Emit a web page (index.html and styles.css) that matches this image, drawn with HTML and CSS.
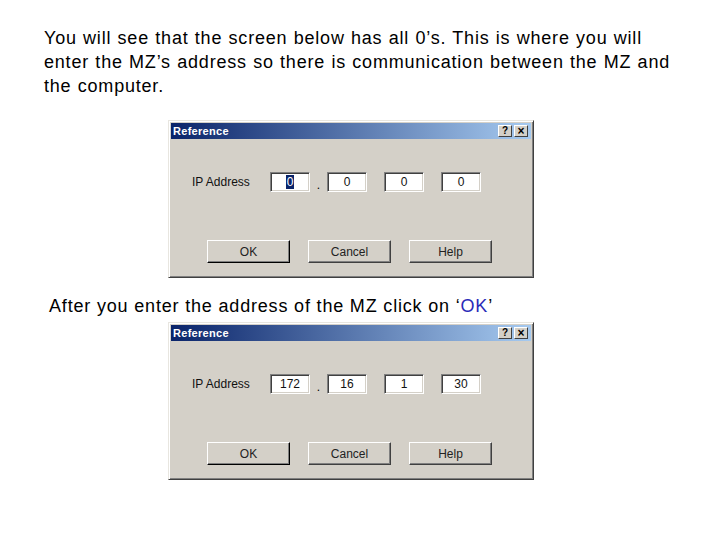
FILE: index.html
```html
<!DOCTYPE html>
<html>
<head>
<meta charset="utf-8">
<link rel="stylesheet" href="styles.css">
</head>
<body>
<p class="intro">You will see that the screen below has all 0’s. This is where you will<br>enter the MZ’s address so there is communication between the MZ and<br>the computer.</p>

<div class="dialog first">
  <div class="titlebar">
    <span class="title">Reference</span>
    <span class="tbtns"><span class="tbtn">?</span><span class="tbtn x">×</span></span>
  </div>
  <div class="ip-row">
    <span class="label">IP Address</span>
    <span class="field"><span class="sel">0</span></span>
    <span class="sep">.</span>
    <span class="field">0</span>
    <span class="sep"></span>
    <span class="field">0</span>
    <span class="sep"></span>
    <span class="field">0</span>
  </div>
  <div class="btn-row">
    <span class="btn default">OK</span>
    <span class="btn">Cancel</span>
    <span class="btn">Help</span>
  </div>
</div>

<p class="after">After you enter the address of the MZ click on ‘<span class="ok">OK</span>’</p>

<div class="dialog second">
  <div class="titlebar">
    <span class="title">Reference</span>
    <span class="tbtns"><span class="tbtn">?</span><span class="tbtn x">×</span></span>
  </div>
  <div class="ip-row">
    <span class="label">IP Address</span>
    <span class="field">172</span>
    <span class="sep">.</span>
    <span class="field">16</span>
    <span class="sep"></span>
    <span class="field">1</span>
    <span class="sep"></span>
    <span class="field">30</span>
  </div>
  <div class="btn-row">
    <span class="btn default">OK</span>
    <span class="btn">Cancel</span>
    <span class="btn">Help</span>
  </div>
</div>
</body>
</html>
```

FILE: styles.css
```css
html, body {
  margin: 0;
  padding: 0;
  background: #ffffff;
}
body {
  font-family: "Liberation Sans", Arial, sans-serif;
  color: #000;
  width: 720px;
  height: 540px;
  overflow: hidden;
}
.intro {
  margin: 0;
  padding: 26px 0 0 44px;
  font-size: 18px;
  line-height: 24px;
  letter-spacing: 0.8px;
  word-spacing: 0.5px;
  white-space: nowrap;
}
.after {
  margin: 16px 0 0 49px;
  font-size: 18px;
  line-height: 24px;
  letter-spacing: 0.82px;
  white-space: nowrap;
}
.ok { color: #2a2ab8; }

.dialog {
  box-sizing: border-box;
  width: 366px;
  height: 158px;
  margin-left: 168px;
  background: #d4d0c8;
  border: 1px solid;
  border-color: #e8e6e0 #404040 #404040 #e8e6e0;
  box-shadow: inset 1px 1px 0 #ffffff, inset -1px -1px 0 #808080;
  padding: 2px;
  font-family: "Liberation Sans", Arial, sans-serif;
  font-size: 12px;
}
.dialog.first { margin-top: 22px; }
.dialog.second { margin-top: 4px; }

.titlebar {
  height: 16px;
  display: flex;
  align-items: center;
  justify-content: space-between;
  background: linear-gradient(to right, #0a246a, #a6caf0);
  padding: 0 3px 0 2px;
}
.title {
  color: #fff;
  font-weight: bold;
  font-size: 11px;
  letter-spacing: 0.3px;
}
.tbtns { display: flex; gap: 2px; }
.tbtn {
  box-sizing: border-box;
  width: 14px;
  height: 12px;
  background: #d4d0c8;
  border: 1px solid;
  border-color: #fff #404040 #404040 #fff;
  font-size: 10px;
  font-weight: bold;
  line-height: 10px;
  text-align: center;
  color: #000;
}
.tbtn.x { font-size: 12px; }

.ip-row {
  display: flex;
  align-items: center;
  margin-top: 33px;
  padding-left: 21px;
}
.label {
  width: 78px;
  font-size: 12px;
  color: #111;
}
.field {
  box-sizing: border-box;
  width: 40px;
  height: 20px;
  background: #fff;
  border: 1px solid;
  border-color: #808080 #fff #fff #808080;
  box-shadow: inset 1px 1px 0 #404040, inset -1px -1px 0 #d4d0c8;
  text-align: center;
  line-height: 18px;
  font-size: 12px;
  color: #111;
}
.sel {
  background: #0a246a;
  color: #fff;
  padding: 0 1px;
}
.sep {
  width: 17px;
  text-align: center;
  align-self: flex-end;
  line-height: 14px;
  font-size: 12px;
}

.btn-row {
  display: flex;
  gap: 18px;
  margin-top: 48px;
  padding-left: 36px;
}
.btn {
  box-sizing: border-box;
  width: 83px;
  height: 23px;
  border: 1px solid;
  border-color: #fff #404040 #404040 #fff;
  box-shadow: inset -1px -1px 0 #808080;
  display: flex;
  align-items: center;
  justify-content: center;
  font-size: 12px;
  color: #222;
}
.btn.default {
  border-color: #fff #000 #000 #fff;
}
```
